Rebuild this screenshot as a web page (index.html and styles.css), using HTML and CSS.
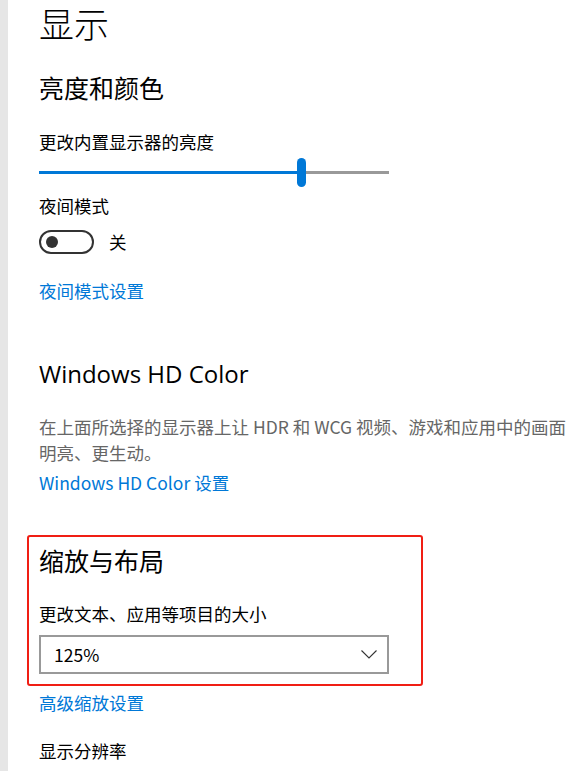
FILE: index.html
```html
<!DOCTYPE html>
<html lang="zh-CN">
<head>
<meta charset="utf-8">
<title>显示</title>
<link rel="stylesheet" href="styles.css">
</head>
<body>
<div class="rail"></div>
<main class="main">
  <h1 class="title">显示</h1>

  <h2 class="section section-first">亮度和颜色</h2>
  <div class="label label-bright">更改内置显示器的亮度</div>
  <div class="slider">
    <div class="track-on"></div>
    <div class="thumb"></div>
    <div class="track-off"></div>
  </div>

  <div class="label label-night">夜间模式</div>
  <div class="toggle-row">
    <div class="toggle"><span class="knob"></span></div>
    <span class="toggle-text">关</span>
  </div>
  <a class="link link-night">夜间模式设置</a>

  <h2 class="section section-hd">Windows HD Color</h2>
  <p class="desc">在上面所选择的显示器上让 HDR 和 WCG 视频、游戏和应用中的画面明亮、更生动。</p>
  <a class="link link-hd">Windows HD Color 设置</a>

  <div class="highlight">
    <h2 class="section section-scale">缩放与布局</h2>
    <div class="label label-scale">更改文本、应用等项目的大小</div>
    <div class="select">
      <span class="select-value">125%</span>
      <svg class="chevron" width="16" height="9" viewBox="0 0 16 9"><polyline points="0.5,0.5 8,8 15.5,0.5" fill="none" stroke="#333" stroke-width="1.1"/></svg>
    </div>
  </div>
  <a class="link link-adv">高级缩放设置</a>

  <div class="label label-res">显示分辨率</div>
</main>
</body>
</html>
```

FILE: styles.css
```css
html, body {
  margin: 0;
  padding: 0;
  background: #ffffff;
  height: 100%;
  overflow: hidden;
}
body {
  display: flex;
  font-family: "Noto Sans CJK SC", "Noto Sans", sans-serif;
  color: #000;
}
.rail {
  width: 8px;
  flex: none;
  background: #e6e6e6;
}
.main {
  padding-left: 31px;
  display: flex;
  flex-direction: column;
  align-items: flex-start;
  min-width: 0;
}
.title {
  margin: 1px 0 0;
  font-size: 35px;
  line-height: 44px;
  font-weight: 300;
}
.section {
  margin: 0;
  font-size: 25px;
  line-height: 34px;
  font-weight: 400;
}
.section-first { margin-top: 25px; }
.section-hd {
  margin-top: 53px;
  font-family: "Open Sans", "Noto Sans", sans-serif;
  font-size: 24px;
}
.label {
  font-size: 17.5px;
  line-height: 26px;
}
.label-bright { margin-top: 25px; }
.label-night { margin-top: 6px; }
.label-scale { margin-top: 24px; }
.label-res { margin-top: 22px; }

.slider {
  margin-top: 3px;
  width: 350px;
  height: 29px;
  display: flex;
  align-items: center;
}
.track-on {
  width: 258px;
  height: 3px;
  background: #0078d7;
}
.thumb {
  width: 9px;
  height: 29px;
  border-radius: 5px;
  background: #0078d7;
}
.track-off {
  flex: 1;
  height: 3px;
  background: #999;
}

.toggle-row {
  margin-top: 10px;
  display: flex;
  align-items: center;
  gap: 15px;
}
.toggle {
  box-sizing: border-box;
  width: 55px;
  height: 24px;
  border: 2px solid #333;
  border-radius: 12px;
  display: flex;
  align-items: center;
  padding-left: 5px;
}
.knob {
  width: 12px;
  height: 12px;
  border-radius: 50%;
  background: #333;
}
.toggle-text {
  font-size: 17.5px;
  line-height: 26px;
}

.link {
  color: #0078d7;
  font-size: 17.5px;
  line-height: 26px;
  text-decoration: none;
}
.link-night { margin-top: 23px; }
.link-hd { margin-top: 4px; }
.link-adv { margin-top: 4px; }

.desc {
  margin: 23px 0 0;
  width: 530px;
  color: #666;
  font-size: 17.5px;
  line-height: 26px;
}

.highlight {
  margin: 39px 0 0 -12px;
  box-sizing: border-box;
  width: 396px;
  border: 2px solid #f01e14;
  border-radius: 3px;
  padding: 6px 10px 10px;
}
.section-scale { margin-top: 0; }
.select {
  margin-top: 8px;
  box-sizing: border-box;
  width: 350px;
  height: 39px;
  border: 2px solid #999;
  display: flex;
  align-items: center;
  justify-content: space-between;
  padding: 0 10px 0 13px;
}
.select-value {
  font-size: 17.5px;
  line-height: 26px;
}
.chevron { display: block; }
```
